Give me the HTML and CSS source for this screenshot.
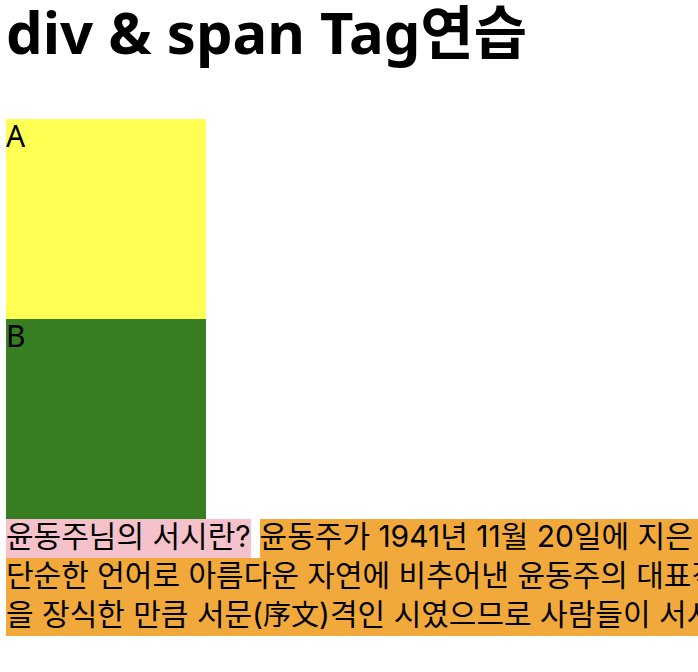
FILE: index.html
```html
<!DOCTYPE html>
<html lang="ko">
<head>
<meta charset="utf-8">
<title>div &amp; span Tag연습</title>
<link rel="stylesheet" href="styles.css">
</head>
<body>
<h1>div &amp; span Tag연습</h1>
<div class="box box-a">A</div>
<div class="box box-b">B</div>
<div class="passage">
<div class="line"><span class="question">윤동주님의 서시란?</span><span class="answer">윤동주가 1941년 11월 20일에 지은 시</span></div>
<div class="line"><span class="answer">단순한 언어로 아름다운 자연에 비추어낸 윤동주의 대표적</span></div>
<div class="line"><span class="answer">을 장식한 만큼 서문(<span class="hanja">序文</span>)격인 시였으므로 사람들이 서시</span></div>
</div>
</body>
</html>
```
FILE: styles.css
```css
body {
  margin: 0 0 0 6px;
  background: #fff;
  color: #000;
  font-family: "Noto Sans", "Noto Sans CJK KR", sans-serif;
  font-size: 30px;
  line-height: 39px;
  overflow-x: hidden;
}

h1 {
  margin: 0 0 56px;
  font-size: 58px;
  line-height: 63px;
  font-weight: 700;
  white-space: nowrap;
}

.box {
  width: 200px;
  height: 200px;
  line-height: 34px;
}

.box-a {
  background: #ffff54;
}

.box-b {
  background: #377e22;
}

.passage {
  overflow: hidden;
  font-family: Inter, "Noto Sans CJK KR", sans-serif;
  white-space: nowrap;
}

.line {
  display: flex;
  gap: 9px;
  height: 39px;
  line-height: 34px;
}

.question {
  flex: none;
  background: #f5c2cb;
}

.answer {
  flex: 1 0 auto;
  background: #f1a93b;
}

.hanja {
  font-size: 28px;
}
```
